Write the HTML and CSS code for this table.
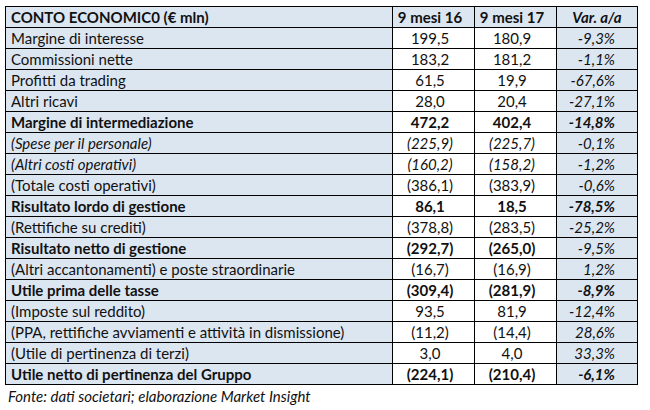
FILE: index.html
```html
<!DOCTYPE html>
<html lang="it">
<head>
<meta charset="utf-8">
<link rel="stylesheet" href="styles.css">
</head>
<body>
<div class="wrap">
<table class="ce">
  <colgroup>
    <col class="c-label"><col class="c-num"><col class="c-num"><col class="c-var">
  </colgroup>
  <thead>
    <tr class="head">
      <th class="label">CONTO ECONOMIC0 (€ mln)</th>
      <th class="num">9 mesi 16</th>
      <th class="num">9 mesi 17</th>
      <th class="var">Var. a/a</th>
    </tr>
  </thead>
  <tbody>
    <tr><td class="label">Margine di interesse</td><td class="num">199,5</td><td class="num">180,9</td><td class="var">-9,3%</td></tr>
    <tr><td class="label">Commissioni nette</td><td class="num">183,2</td><td class="num">181,2</td><td class="var">-1,1%</td></tr>
    <tr><td class="label">Profitti da trading</td><td class="num">61,5</td><td class="num">19,9</td><td class="var">-67,6%</td></tr>
    <tr><td class="label">Altri ricavi</td><td class="num">28,0</td><td class="num">20,4</td><td class="var">-27,1%</td></tr>
    <tr class="bold"><td class="label">Margine di intermediazione</td><td class="num">472,2</td><td class="num">402,4</td><td class="var">-14,8%</td></tr>
    <tr class="ital"><td class="label">(Spese per il personale)</td><td class="num">(225,9)</td><td class="num">(225,7)</td><td class="var">-0,1%</td></tr>
    <tr class="ital"><td class="label">(Altri costi operativi)</td><td class="num">(160,2)</td><td class="num">(158,2)</td><td class="var">-1,2%</td></tr>
    <tr><td class="label">(Totale costi operativi)</td><td class="num">(386,1)</td><td class="num">(383,9)</td><td class="var">-0,6%</td></tr>
    <tr class="bold"><td class="label">Risultato lordo di gestione</td><td class="num">86,1</td><td class="num">18,5</td><td class="var">-78,5%</td></tr>
    <tr><td class="label">(Rettifiche su crediti)</td><td class="num">(378,8)</td><td class="num">(283,5)</td><td class="var">-25,2%</td></tr>
    <tr class="bold"><td class="label">Risultato netto di gestione</td><td class="num">(292,7)</td><td class="num">(265,0)</td><td class="var light">-9,5%</td></tr>
    <tr><td class="label">(Altri accantonamenti) e poste straordinarie</td><td class="num">(16,7)</td><td class="num">(16,9)</td><td class="var">1,2%</td></tr>
    <tr class="bold"><td class="label">Utile prima delle tasse</td><td class="num">(309,4)</td><td class="num">(281,9)</td><td class="var">-8,9%</td></tr>
    <tr><td class="label">(Imposte sul reddito)</td><td class="num">93,5</td><td class="num">81,9</td><td class="var">-12,4%</td></tr>
    <tr><td class="label">(PPA, rettifiche avviamenti e attività in dismissione)</td><td class="num">(11,2)</td><td class="num">(14,4)</td><td class="var">28,6%</td></tr>
    <tr><td class="label">(Utile di pertinenza di terzi)</td><td class="num">3,0</td><td class="num">4,0</td><td class="var">33,3%</td></tr>
    <tr class="bold"><td class="label">Utile netto di pertinenza del Gruppo</td><td class="num">(224,1)</td><td class="num">(210,4)</td><td class="var">-6,1%</td></tr>
  </tbody>
</table>
<p class="source">Fonte: dati societari; elaborazione Market Insight</p>
</div>
</body>
</html>
```

FILE: styles.css
```css
html, body {
  margin: 0;
  padding: 0;
  background: #ffffff;
}
.wrap {
  padding: 6px 0 0 5px;
  font-family: Lato, "Open Sans", sans-serif;
  color: #111111;
}
.ce {
  border-collapse: collapse;
  width: 632px;
  table-layout: fixed;
  font-size: 15px;
}
.c-label { width: 387px; }
.c-num { width: 82px; }
.c-var { width: 81px; }
.ce th, .ce td {
  border: 1px solid #000000;
  height: 20px;
  padding: 0;
  line-height: 20px;
  white-space: nowrap;
  overflow: hidden;
  font-weight: normal;
}
.ce .label {
  text-align: left;
  padding-left: 5px;
  background: #dce6f1;
}
.ce .num {
  text-align: center;
  padding-right: 7px;
  background: #ffffff;
}
.ce .var {
  text-align: right;
  padding-right: 22px;
  font-style: italic;
  background: #dce6f1;
}
.ce .head th {
  background: #dce6f1;
  font-weight: bold;
}
.ce .head th.var {
  text-align: center;
  padding-right: 0;
}
.ce .bold td { font-weight: bold; }
.ce .bold td.light { font-weight: normal; }
.ce .ital td { font-style: italic; }
.source {
  margin: 2px 0 0 3px;
  font-size: 15px;
  font-style: italic;
  color: #111111;
}
```
